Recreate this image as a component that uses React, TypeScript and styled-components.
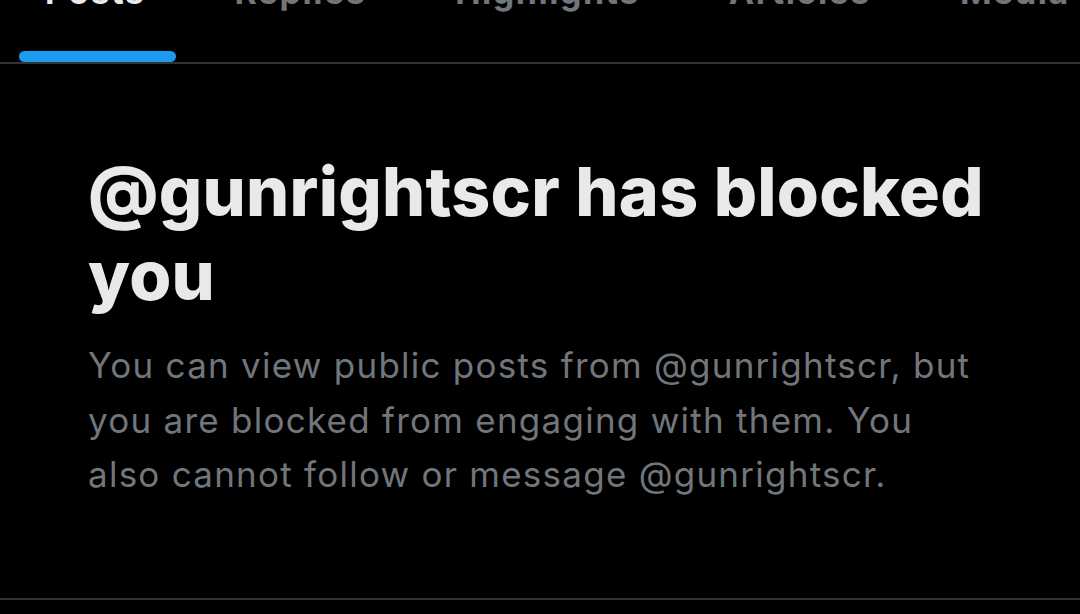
import React from "react";
import styled, { createGlobalStyle } from "styled-components";

const Global = createGlobalStyle`
  html, body {
    margin: 0;
    padding: 0;
    background: #000;
  }
  body {
    font-family: Inter, "Noto Sans", "Liberation Sans", sans-serif;
    -webkit-font-smoothing: antialiased;
  }
`;

const Screen = styled.div`
  width: 1080px;
  height: 614px;
  overflow: hidden;
  background: #000;
  display: flex;
  flex-direction: column;
`;

const TabBar = styled.nav`
  display: flex;
  height: 62px;
  border-bottom: 2px solid #2f3336;
  overflow: hidden;
  flex-shrink: 0;
`;

const Tab = styled.div`
  display: flex;
  flex-direction: column;
  justify-content: space-between;
  padding: 0 44px 0 45px;
  flex-shrink: 0;
`;

const TabLabel = styled.span<{ $active?: boolean }>`
  margin-top: -25px;
  font-size: 34px;
  line-height: 34px;
  font-weight: 700;
  letter-spacing: 1.5px;
  white-space: nowrap;
  color: ${(p) => (p.$active ? "#e7e9ea" : "#71767b")};
`;

const Indicator = styled.div`
  height: 11px;
  margin: 0 -31px 0 -26px;
  border-radius: 6px;
  background: #1d9bf0;
`;

const Notice = styled.section`
  padding: 85px 40px 96px 88px;
  border-bottom: 2px solid #2f3336;
`;

const Title = styled.h1`
  margin: 0;
  font-size: 68px;
  line-height: 84px;
  font-weight: 800;
  color: #e7e9ea;
  letter-spacing: 0.3px;
`;

const Body = styled.p`
  margin: 21px 0 0;
  width: 895px;
  font-size: 35px;
  line-height: 54.5px;
  font-weight: 400;
  letter-spacing: 1.25px;
  color: #71767b;
`;

const tabs = ["Posts", "Replies", "Highlights", "Articles", "Media"];

export default function App() {
  return (
    <Screen>
      <Global />
      <TabBar>
        {tabs.map((t, i) => (
          <Tab key={t}>
            <TabLabel $active={i === 0}>{t}</TabLabel>
            {i === 0 && <Indicator />}
          </Tab>
        ))}
      </TabBar>
      <Notice>
        <Title>@gunrightscr has blocked you</Title>
        <Body>
          You can view public posts from @gunrightscr, but you are blocked from
          engaging with them. You also cannot follow or message @gunrightscr.
        </Body>
      </Notice>
    </Screen>
  );
}
